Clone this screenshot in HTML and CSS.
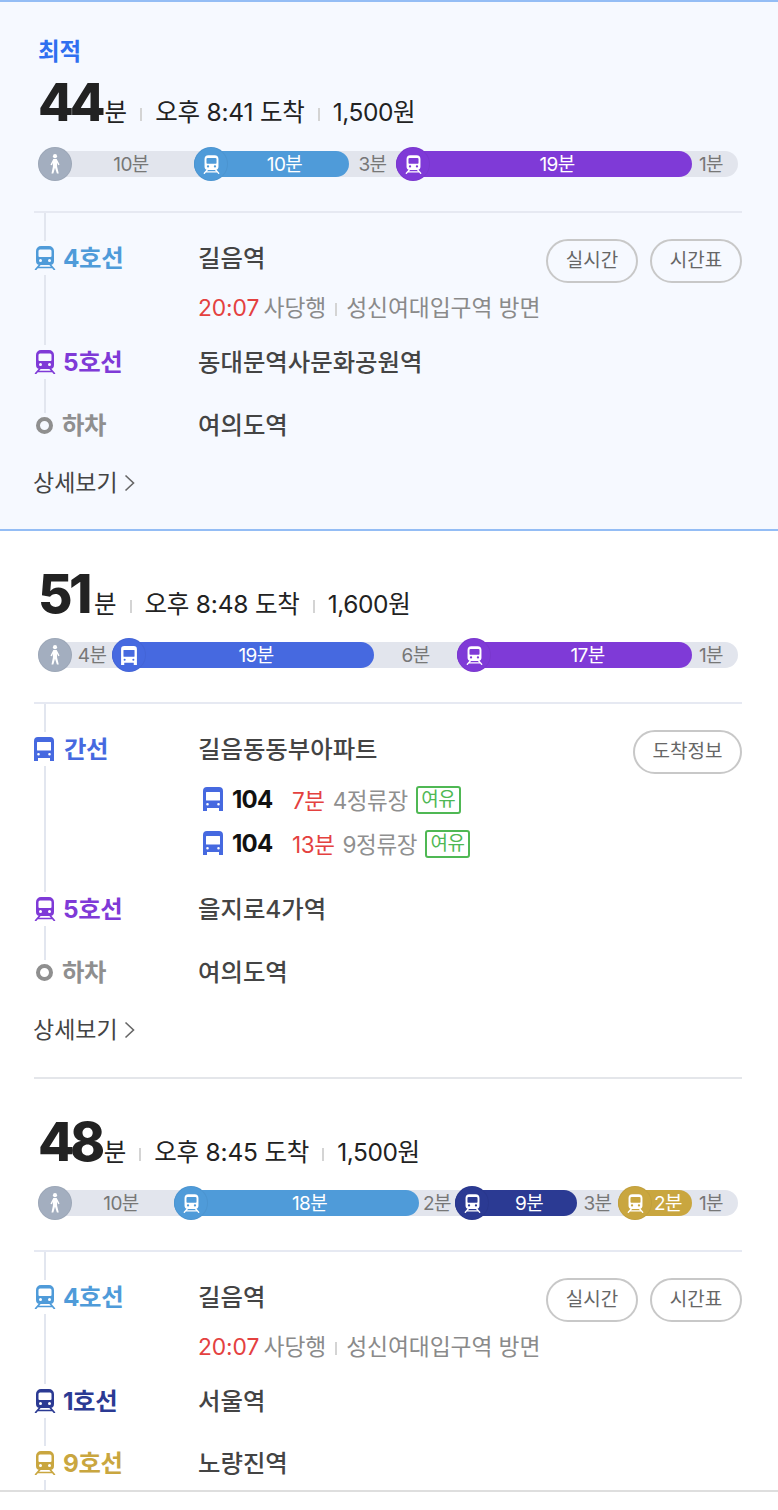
FILE: index.html
```html
<!DOCTYPE html>
<html lang="ko">
<head>
<meta charset="utf-8">
<title>경로 검색 결과</title>
<link rel="stylesheet" href="styles.css">
</head>
<body>
<svg class="defs" width="0" height="0" aria-hidden="true">
  <symbol id="train" viewBox="0 0 22 24">
    <path fill="currentColor" fill-rule="evenodd" d="M7 0h8a5 5 0 0 1 5 5v10a4 4 0 0 1-4 4H6a4 4 0 0 1-4-4V5a5 5 0 0 1 5-5zM6 3.500a1.500 1.500 0 0 0-1.500 1.500v5a1 1 0 0 0 1 1h11a1 1 0 0 0 1-1V5A1.500 1.500 0 0 0 16 3.500zM6.500 13a1.500 1.500 0 1 0 0 3 1.500 1.500 0 0 0 0-3zM15.500 13a1.500 1.500 0 1 0 0 3 1.500 1.500 0 0 0 0-3z"/>
    <path fill="none" stroke="currentColor" stroke-width="1.700" d="M6 18.500 1.200 24M16 18.500 20.800 24M3.800 21.500h14.400"/>
  </symbol>
  <symbol id="bus" viewBox="0 0 20 24">
    <path fill="currentColor" fill-rule="evenodd" d="M4 0h12a4 4 0 0 1 4 4v20h-4v-3H4v3H0V4a4 4 0 0 1 4-4zM3.500 5a.5.5 0 0 0-.5.5V13a.5.5 0 0 0 .5.5h13a.5.5 0 0 0 .5-.5V5.500a.5.5 0 0 0-.5-.5zM4.500 16a1.300 1.300 0 1 0 0 2.600 1.300 1.300 0 0 0 0-2.600zM15.500 16a1.300 1.300 0 1 0 0 2.600 1.300 1.300 0 0 0 0-2.600z"/>
  </symbol>
  <symbol id="walk" viewBox="0 0 14 24">
    <circle cx="7" cy="2.600" r="2.500" fill="currentColor"/>
    <path fill="currentColor" d="M5 6h4l3.500 6.500-1.500 1L9.500 10.500V15l2 8.500H9.300L7 16.500 5 23.500H2.800L4.500 15v-4.500L3.300 13.500 1.500 12.800z"/>
  </symbol>
</svg>

<section class="route route-best">
  <div class="best">최적</div>
  <div class="summary">
    <span class="mins"><b>44</b>분</span><i class="sep"></i><span>오후 8:41 도착</span><i class="sep"></i><span class="cost">1,500원</span>
  </div>
  <div class="bar">
    <div class="walk seg" style="width:156px"><span class="dot dot-walk"><svg class="i-walk"><use href="#walk"/></svg></span><span class="t t-w">10분</span></div>
    <div class="seg c4" style="width:155px"><span class="dot"><svg class="i-train"><use href="#train"/></svg></span><span class="t t-r">10분</span></div>
    <div class="gap" style="width:47px">3분</div>
    <div class="seg c5" style="width:296px"><span class="dot"><svg class="i-train"><use href="#train"/></svg></span><span class="t t-r">19분</span></div>
    <div class="gap end">1분</div>
  </div>
  <div class="steps">
    <div class="row">
      <span class="ico t4"><svg class="big-train"><use href="#train"/></svg></span><span class="line num t4">4호선</span><span class="station">길음역</span>
      <span class="btns"><button class="pill">실시간</button><button class="pill">시간표</button></span>
    </div>
    <div class="sub"><span class="red">20:07</span> 사당행<i class="sep-sm"></i>성신여대입구역 방면</div>
    <div class="row r-next">
      <span class="ico t5"><svg class="big-train"><use href="#train"/></svg></span><span class="line num t5">5호선</span><span class="station">동대문역사문화공원역</span>
    </div>
    <div class="row r-off">
      <span class="ico off"><i class="ring"></i></span><span class="line gray">하차</span><span class="station">여의도역</span>
    </div>
    <div class="detail">상세보기<svg class="chev" viewBox="0 0 11 18"><path d="M1.500 1.500 9.500 9l-8 7.500"/></svg></div>
  </div>
</section>

<section class="route route-two">
  <div class="summary">
    <span class="mins"><b>51</b>분</span><i class="sep"></i><span>오후 8:48 도착</span><i class="sep"></i><span class="cost">1,600원</span>
  </div>
  <div class="bar">
    <div class="walk seg" style="width:74px"><span class="dot dot-walk"><svg class="i-walk"><use href="#walk"/></svg></span><span class="t">4분</span></div>
    <div class="seg cb" style="width:262px"><span class="dot"><svg class="i-bus"><use href="#bus"/></svg></span><span class="t t-r">19분</span></div>
    <div class="gap" style="width:83px">6분</div>
    <div class="seg c5" style="width:235px"><span class="dot"><svg class="i-train"><use href="#train"/></svg></span><span class="t t-r">17분</span></div>
    <div class="gap end">1분</div>
  </div>
  <div class="steps">
    <div class="row">
      <span class="ico tb"><svg class="big-bus"><use href="#bus"/></svg></span><span class="line tb">간선</span><span class="station">길음동동부아파트</span>
      <span class="btns"><button class="pill">도착정보</button></span>
    </div>
    <div class="bus r-bus1">
      <svg class="tb big-bus"><use href="#bus"/></svg><b class="no">104</b><span class="red eta">7분</span><span class="stops">4정류장</span><span class="tag">여유</span>
    </div>
    <div class="bus r-bus2">
      <svg class="tb big-bus"><use href="#bus"/></svg><b class="no">104</b><span class="red eta">13분</span><span class="stops">9정류장</span><span class="tag">여유</span>
    </div>
    <div class="row r-after">
      <span class="ico t5"><svg class="big-train"><use href="#train"/></svg></span><span class="line num t5">5호선</span><span class="station">을지로4가역</span>
    </div>
    <div class="row r-off">
      <span class="ico off"><i class="ring"></i></span><span class="line gray">하차</span><span class="station">여의도역</span>
    </div>
    <div class="detail">상세보기<svg class="chev" viewBox="0 0 11 18"><path d="M1.500 1.500 9.500 9l-8 7.500"/></svg></div>
  </div>
</section>

<div class="rule-wrap"><div class="rule"></div></div>

<section class="route route-three">
  <div class="summary">
    <span class="mins"><b>48</b>분</span><i class="sep"></i><span>오후 8:45 도착</span><i class="sep"></i><span class="cost">1,500원</span>
  </div>
  <div class="bar">
    <div class="walk seg" style="width:136px"><span class="dot dot-walk"><svg class="i-walk"><use href="#walk"/></svg></span><span class="t t-w">10분</span></div>
    <div class="seg c4" style="width:245px"><span class="dot"><svg class="i-train"><use href="#train"/></svg></span><span class="t t-r">18분</span></div>
    <div class="gap" style="width:36px">2분</div>
    <div class="seg c1" style="width:122px"><span class="dot"><svg class="i-train"><use href="#train"/></svg></span><span class="t t-r">9분</span></div>
    <div class="gap" style="width:41px">3분</div>
    <div class="seg c9" style="width:74px"><span class="dot"><svg class="i-train"><use href="#train"/></svg></span><span class="t t-r">2분</span></div>
    <div class="gap end">1분</div>
  </div>
  <div class="steps steps-open">
    <div class="row">
      <span class="ico t4"><svg class="big-train"><use href="#train"/></svg></span><span class="line num t4">4호선</span><span class="station">길음역</span>
      <span class="btns"><button class="pill">실시간</button><button class="pill">시간표</button></span>
    </div>
    <div class="sub"><span class="red">20:07</span> 사당행<i class="sep-sm"></i>성신여대입구역 방면</div>
    <div class="row r-next">
      <span class="ico t1"><svg class="big-train"><use href="#train"/></svg></span><span class="line num t1">1호선</span><span class="station">서울역</span>
    </div>
    <div class="row r-off2">
      <span class="ico t9"><svg class="big-train"><use href="#train"/></svg></span><span class="line num t9">9호선</span><span class="station">노량진역</span>
    </div>
  </div>
</section>
</body>
</html>
```
FILE: styles.css
```css
* { box-sizing: border-box; }
html, body { margin: 0; padding: 0; background: #fff; }
body {
  width: 778px;
  height: 1510px;
  overflow: hidden;
  font-family: Inter, "Noto Sans CJK KR", "Noto Sans", sans-serif;
  color: #222;
}
.defs { position: absolute; }

.route { --bg: #fff; background: var(--bg); padding: 0 36px 0 34px; }
.route-best { --bg: #f6f9ff; height: 531px; padding-top: 34px; border-top: 2px solid #94bdf5; border-bottom: 2px solid #94bdf5; }
.route-two { height: 546px; padding-top: 44px; }
.route-three { height: 413px; padding-top: 44px; border-bottom: 2px solid #dedede; overflow: hidden; }
.rule-wrap { padding: 0 36px 0 34px; }
.rule { height: 2px; background: #e4e6ea; }

.best { margin-left: 4px; height: 30px; line-height: 32px; font-size: 23.500px; font-weight: 700; color: #2f6ff0; }
.summary {
  display: flex; align-items: baseline; margin-left: 4px; height: 60px;
  font-size: 24.500px; line-height: 38px; letter-spacing: -0.200px; color: #222;
}
.route-best .summary { margin-top: 18px; }
.mins { letter-spacing: 0; }
.cost { letter-spacing: -0.400px; }
.mins b { font-size: 53px; font-weight: 800; letter-spacing: -3.500px; margin-right: 5px; }
.route-best .mins b { font-size: 52px; letter-spacing: -4px; margin-right: 3px; }
.route-three .mins b { letter-spacing: -4.500px; margin-right: 3px; }
.sep { width: 2px; height: 13px; background: #d4d4d4; margin: 0 13px 0 13px; }

.bar {
  display: flex; height: 26px; margin: 7px 4px 34px; border-radius: 13px;
  background: #e2e5ed; font-size: 19px; line-height: 26px; color: #777; letter-spacing: -0.600px;
}
.seg { display: flex; align-items: center; border-radius: 13px; color: #fff; }
.seg .t { flex: 1; padding-top: 2px; text-align: center; }
.seg .t-r { padding-right: 8px; }
.seg .t-w { padding-right: 4px; }
.walk { color: #777; }
.gap { text-align: center; line-height: 28px; }
.gap.end { flex: 1; padding-right: 8px; }
.dot {
  flex: none; display: flex; align-items: center; justify-content: center;
  width: 34px; height: 34px; margin: -4px 0; border-radius: 50%;
  border: 1px solid rgba(0, 0, 0, 0.04); background: inherit; color: #fff;
}
.dot-walk { background: #a3aebf; }
.c4 { background: #4f9bd9; }
.c5 { background: #7f3ad7; }
.cb { background: #4669e0; }
.c1 { background: #2b3a93; }
.c9 { background: #c9a63f; }
.i-train { width: 17px; height: 19px; }
.i-bus { width: 16px; height: 19px; }
.i-walk { width: 12px; height: 20px; }

.steps { position: relative; padding-top: 28px; border-top: 2px solid #e6e9f2; }
.steps::before { content: ""; position: absolute; left: 10px; top: 0; bottom: 70px; width: 2px; background: #e2e6ef; }
.steps-open::before { bottom: -20px; }
.row { position: relative; display: flex; align-items: center; height: 34px; }
.ico {
  flex: none; display: flex; align-items: center; width: 30px; height: 34px; background: transparent;
}
.ico svg { display: block; background: var(--bg); box-shadow: 0 5px 0 var(--bg), 0 -5px 0 var(--bg); }
.off { width: 28px; }
.big-train { width: 22px; height: 24px; }
.big-bus { width: 20px; height: 24px; flex: none; }
.line { flex: none; width: 134px; font-size: 24.400px; font-weight: 700; line-height: 34px; letter-spacing: -0.400px; }
.line.num { width: 135px; margin-left: -1px; }
.off + .line { width: 136px; }
.station { font-size: 24.400px; font-weight: 500; color: #444; line-height: 34px; }
.t4 { color: #4f9bd9; }
.t5 { color: #7f3ad7; }
.tb { color: #4669e0; }
.t1 { color: #2b3a93; }
.t9 { color: #c9a63f; }
.gray { color: #8f8f8f; }
.ring { display: block; width: 17px; height: 17px; margin-left: 2px; border: 4px solid #8f8f8f; border-radius: 50%; background: var(--bg); box-shadow: 0 0 0 4px var(--bg); }

.btns { margin-left: auto; display: flex; gap: 12px; align-self: flex-start; margin-top: -2px; }
.pill {
  min-width: 92px; height: 44px; padding: 0 17.500px; border: 2px solid #c8c8c8; border-radius: 22px; background: transparent;
  font: 400 19px/38px Inter, "Noto Sans CJK KR", "Noto Sans", sans-serif; color: #666;
}

.sub { margin: 18px 0 0 164px; height: 30px; line-height: 30px; font-size: 22.800px; color: #8a8a8a; letter-spacing: -0.100px; }
.red { color: #e4413f; }
.sub .red { margin-right: -2px; }
.sep-sm { display: inline-block; width: 2px; height: 13px; background: #d4d4d4; margin: 0 9px; }
.r-next { margin-top: 22px; }
.r-off { margin-top: 29px; }
.r-off2 { margin-top: 28px; }
.detail { display: flex; align-items: center; margin: 26px 0 0 -1px; height: 30px; line-height: 30px; font-size: 23px; color: #444; }
.chev { width: 11px; height: 18px; margin-left: 6px; fill: none; stroke: #666; stroke-width: 1.600; }

.bus { display: flex; align-items: center; height: 34px; margin-left: 169px; font-size: 22.500px; color: #8f8f8f; letter-spacing: -0.400px; }
.r-bus1 { margin-top: 16px; }
.r-bus2 { margin-top: 10px; }
.r-after { margin-top: 32px; }
.no { margin-left: 9px; width: 60px; font-size: 24px; font-weight: 700; color: #111; letter-spacing: -0.800px; }
.eta { margin-right: 8px; }
.tag {
  margin: 2px 0 0 8px; height: 28px; padding: 0 3.500px; border: 2px solid #4fb854; border-radius: 3px;
  font-size: 19px; line-height: 24px; color: #4fb854;
}
```
